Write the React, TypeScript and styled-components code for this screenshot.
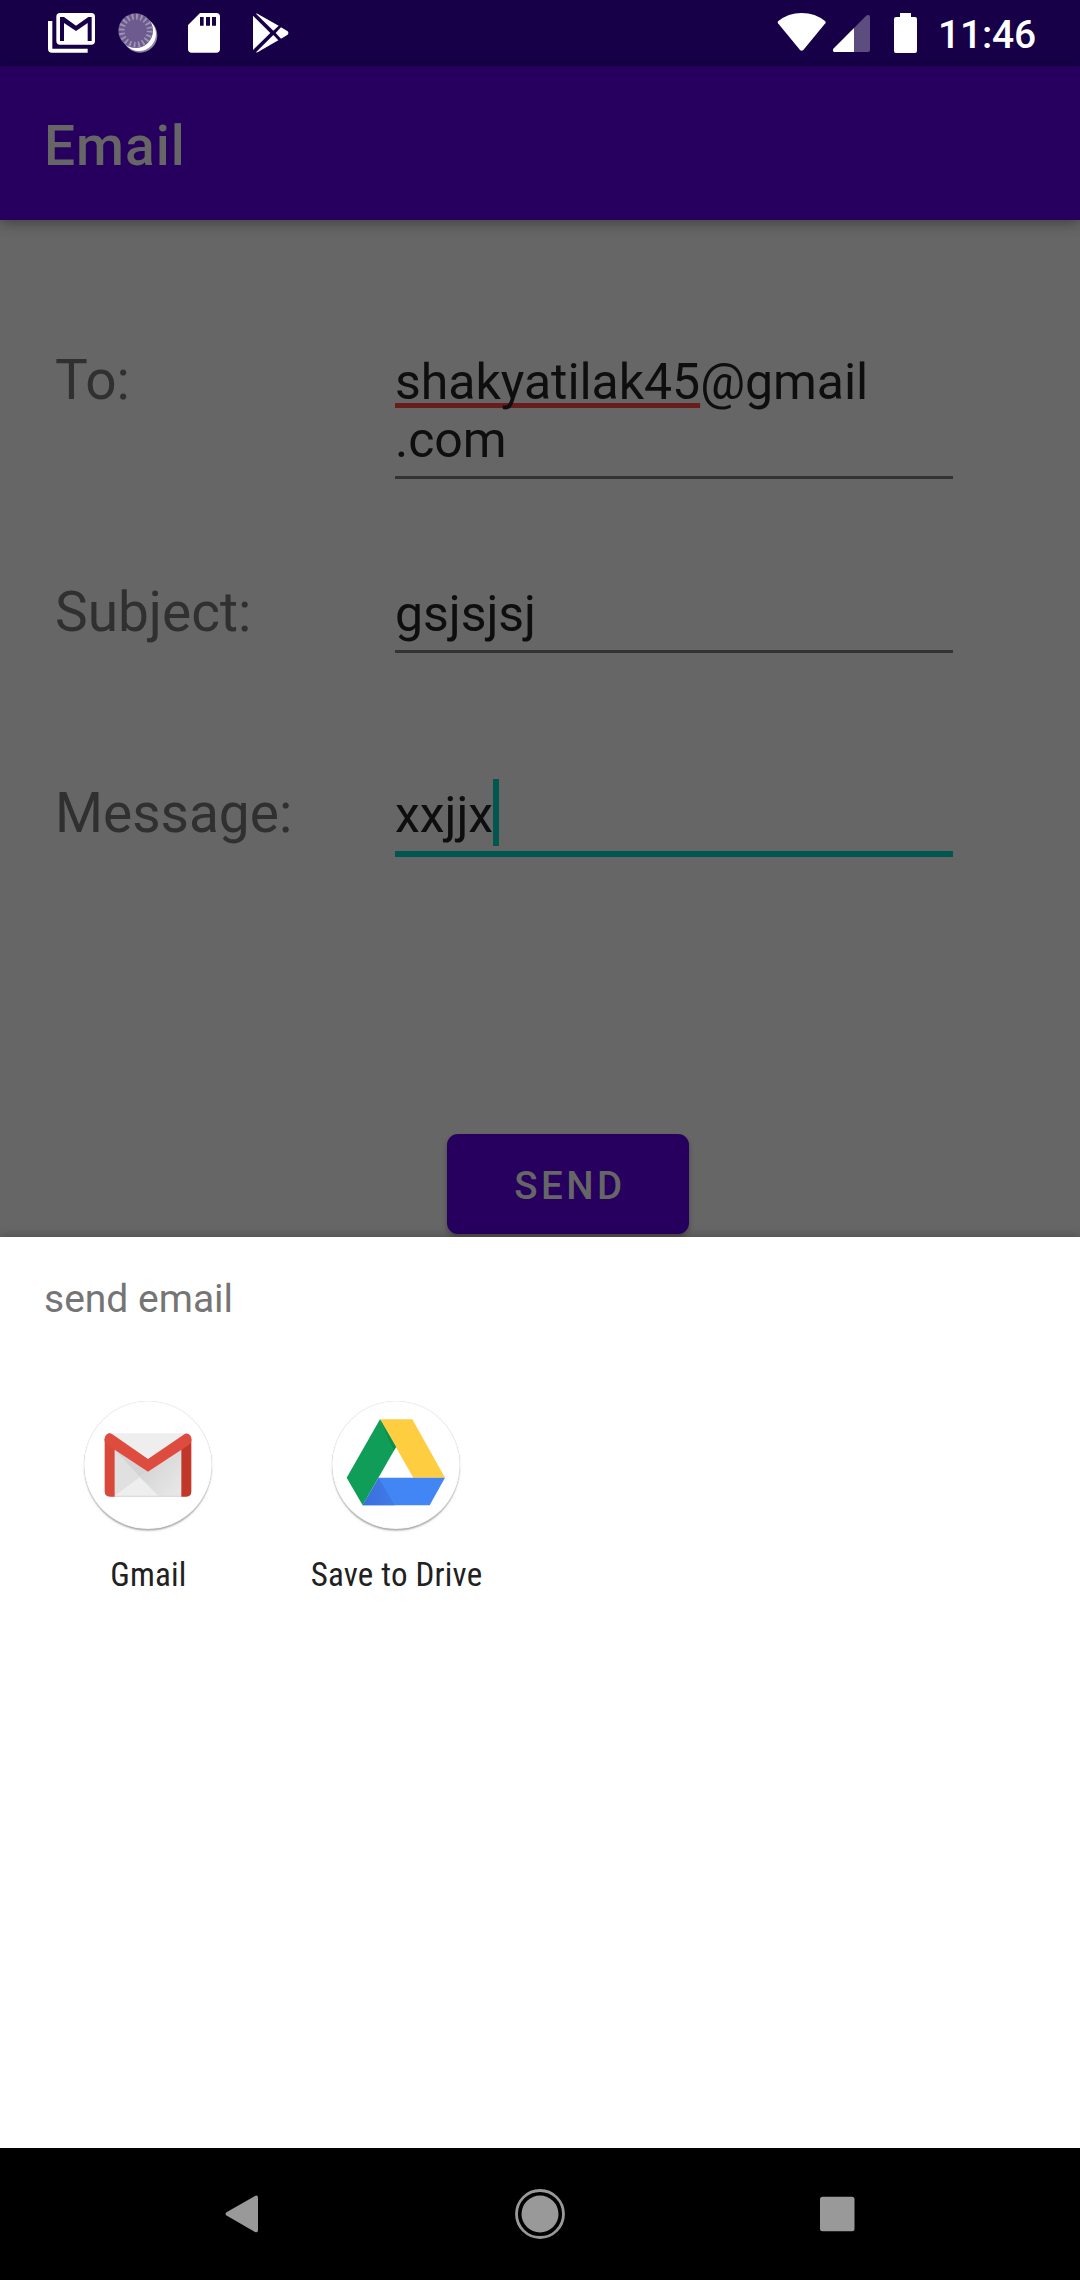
import React from "react";
import styled, { createGlobalStyle } from "styled-components";

const Global = createGlobalStyle`
  html, body { margin: 0; padding: 0; background: #666666; }
  * { box-sizing: border-box; }
`;

const Screen = styled.div`
  width: 1080px;
  height: 2280px;
  display: flex;
  flex-direction: column;
  overflow: hidden;
  background: #666666;
  font-family: Roboto, "Noto Sans", sans-serif;
`;

const StatusBar = styled.header`
  height: 66px;
  flex: none;
  display: flex;
  justify-content: space-between;
  align-items: center;
  padding: 0 44px 0 39px;
  background: #170048;
`;

const StatusGroup = styled.div`
  display: flex;
  align-items: center;
  height: 66px;
`;

const StatusGlyph = styled.svg<{ $width: number }>`
  display: block;
  width: ${(p) => p.$width}px;
  height: 48px;
`;

const Clock = styled.span`
  font-size: 39px;
  line-height: 66px;
  font-weight: 500;
  letter-spacing: -0.2px;
  color: #ffffff;
  padding-top: 2px;
  height: 66px;
  width: 98px;
  white-space: nowrap;
`;

const AppBar = styled.div`
  height: 154px;
  flex: none;
  display: flex;
  align-items: center;
  padding: 5px 44px 0;
  background: #27005f;
  box-shadow: 0 4px 12px rgba(0, 0, 0, 0.32);
`;

const Title = styled.h1`
  margin: 0;
  font-size: 55px;
  line-height: 64px;
  font-weight: 500;
  letter-spacing: 1px;
  color: #666666;
`;

const Form = styled.main`
  height: 1017px;
  flex: none;
  padding: 128px 55px 0;
  display: flex;
  flex-direction: column;
`;

const FieldRow = styled.div<{ $after: number }>`
  display: grid;
  grid-template-columns: 340px 558px;
  align-items: baseline;
  margin-bottom: ${(p) => p.$after}px;
`;

const Label = styled.label`
  font-size: 55px;
  line-height: 64px;
  color: #303030;
`;

const Input = styled.div<{ $focused?: boolean }>`
  font-size: 50px;
  line-height: 58px;
  letter-spacing: -0.05px;
  color: #0e0e0e;
  padding-bottom: 7px;
  border-bottom: ${(p) => (p.$focused ? "6px solid #01574f" : "3px solid #333333")};
`;

const Misspelled = styled.span`
  text-decoration: underline 5px #681d1d;
  text-decoration-skip-ink: none;
  text-underline-offset: 4px;
`;

const CaretHost = styled.span`
  position: relative;
`;

const Caret = styled.i`
  position: absolute;
  right: -6px;
  top: -7px;
  width: 6px;
  height: 67px;
  background: #01574f;
`;

const SendButton = styled.button`
  align-self: flex-start;
  margin-left: 392px;
  width: 242px;
  height: 100px;
  padding: 3px 0 0 4px;
  border: 0;
  border-radius: 11px;
  background: #27005f;
  box-shadow: 0 3px 5px rgba(0, 0, 0, 0.3);
  color: #666666;
  font: 500 38.5px/46px Roboto, sans-serif;
  letter-spacing: 3.44px;
`;

const Sheet = styled.section`
  position: relative;
  height: 911px;
  flex: none;
  padding: 39px 24px 0;
  background: #ffffff;
  box-shadow: 0 0 10px rgba(0, 0, 0, 0.3);
`;

const SheetTitle = styled.h2`
  margin: 0 0 78px 20px;
  font-size: 39px;
  line-height: 47px;
  font-weight: 400;
  color: #757575;
`;

const Targets = styled.div`
  display: grid;
  grid-template-columns: repeat(4, 248px);
`;

const Target = styled.div`
  display: flex;
  flex-direction: column;
  align-items: center;
  gap: 26px;
`;

const AppDisc = styled.div`
  width: 128px;
  height: 128px;
  border-radius: 50%;
  background: #ffffff;
  box-shadow: inset 0 0 1px rgba(0, 0, 0, 0.3), 0 2px 2px -0.5px rgba(0, 0, 0, 0.36);

  svg {
    display: block;
    width: 128px;
    height: 128px;
  }
`;

const TargetName = styled.span`
  font-family: "Roboto Condensed", Roboto, sans-serif;
  font-size: 33px;
  line-height: 40px;
  font-stretch: condensed;
  letter-spacing: 0.2px;
  padding-left: 1px;
  white-space: nowrap;
  color: #212121;
`;

const NavBar = styled.nav`
  height: 132px;
  flex: none;
  display: flex;
  justify-content: space-between;
  align-items: center;
  padding: 0 212px;
  background: #000000;

  svg {
    display: block;
    width: 60px;
    height: 60px;
    fill: #999999;
  }
`;

const MailStackGlyph = () => (
  <StatusGlyph $width={66} viewBox="27 27 198 144" fill="#fff">
    <path d="M54 63h13v83h106v12H66q-12 0-12-12z" />
    <path
      fillRule="evenodd"
      d="M90 39h94q11 0 11 11v73q0 11-11 11H90q-11 0-11-11V50q0-11 11-11zM90 51v72h12V69l36 24 35-24v54h12V51h-10l-37 26-36-26z"
    />
  </StatusGlyph>
);

const SyncGlyph = () => (
  <StatusGlyph $width={66} viewBox="225 27 198 144">
    <circle cx="330" cy="106" r="52" fill="#8f83a8" />
    <circle cx="327" cy="102" r="51" fill="#fff" />
    <circle cx="317" cy="92" r="52" fill="#6d5b90" />
    <circle
      cx="317"
      cy="92"
      r="42"
      fill="none"
      stroke="#9e93b4"
      strokeWidth="17"
      strokeDasharray="5.5 7.694"
    />
  </StatusGlyph>
);

const SdGlyph = () => (
  <StatusGlyph $width={66} viewBox="423 27 198 144" fill="#fff">
    <path
      fillRule="evenodd"
      d="M510 39h49q11 0 11 11v97q0 11-11 11h-74q-11 0-11-11V75zM510 51v26h11V51zM528 51v26h12V51zM546 51v26h12V51z"
    />
  </StatusGlyph>
);

const PlayGlyph = () => (
  <StatusGlyph $width={66} viewBox="621 27 198 144" fill="#fff">
    <path d="M669 47v103l52-51z" />
    <path d="M678 41q3-1 7 2l61 34-16 15z" />
    <path d="M753 82l20 12q5 5 0 10l-20 12-16-17z" />
    <path d="M730 105l15 16-61 35q-4 2-6 1z" />
  </StatusGlyph>
);

const WifiGlyph = () => (
  <StatusGlyph $width={52} viewBox="48 27 156 144" fill="#fff">
    <path d="M54 64Q84 39 125 39t71 25q2 3 0 6l-66 80q-5 5-10 0L54 70q-2-3 0-6z" />
  </StatusGlyph>
);

const SignalGlyph = () => (
  <StatusGlyph $width={44} viewBox="204 27 132 144">
    <path d="M282 84l38-38q10-3 10 5v99q0 6-6 6h-42z" fill="#5d4d7e" />
    <path d="M282 84v72h-58q-8-2-4-10z" fill="#fff" />
  </StatusGlyph>
);

const BatteryGlyph = () => (
  <StatusGlyph $width={66} viewBox="336 27 198 144" fill="#fff">
    <path d="M420 39h33v12h12q6 0 6 6v96q0 6-6 6h-57q-6 0-6-6V57q0-6 6-6h12z" />
  </StatusGlyph>
);

const GmailLogo = () => (
  <svg viewBox="42 32 384 384">
    <defs>
      <linearGradient id="envelopeFold" x1="0" y1="0" x2="1" y2="1">
        <stop offset="0" stopColor="#cfcfcf" />
        <stop offset="1" stopColor="#e9e9e9" />
      </linearGradient>
    </defs>
    <path d="M118 129h233v190H118z" fill="#eeeeee" />
    <path d="M134 178v138l76-56z" fill="#e0e0e0" />
    <path d="M134 178l100 66-24 17z" fill="#d4d4d4" />
    <path d="M234 244l100-66v140h-68l-56-57z" fill="url(#envelopeFold)" />
    <path d="M134 316h200v3H134z" fill="#d5d5d5" />
    <path d="M104 146l30 20v153h-14q-16 0-16-16z" fill="#d8483b" />
    <path d="M364 146l-30 20v153h15q15 0 15-16z" fill="#c1372a" />
    <path d="M104 153q-3-17 12-24 6-1 11 3l107 74 109-74q7-5 14 0 9 6 7 20-1 8-9 13L234 244 113 165q-8-5-9-12z" fill="#de4c40" />
  </svg>
);

const DriveLogo = () => (
  <svg viewBox="96 32 384 384">
    <defs>
      <linearGradient id="greenShade" x1="0" y1="1" x2="1" y2="0">
        <stop offset="0" stopColor="#109d58" />
        <stop offset="1" stopColor="#0b8043" />
      </linearGradient>
      <linearGradient id="blueShade" x1="0" y1="0" x2="1" y2="0">
        <stop offset="0" stopColor="#3a6fd9" />
        <stop offset="1" stopColor="#407ce9" />
      </linearGradient>
    </defs>
    <path d="M240 87h97l98 175h-95z" fill="#ffcd40" />
    <path d="M240 87l48 83L188 345l-48-83z" fill="#109d58" />
    <path d="M240 87l48 83-7 12z" fill="url(#greenShade)" />
    <path d="M236 262h199l-46 83H188z" fill="#4285f4" />
    <path d="M236 262l48 83h-96z" fill="url(#blueShade)" />
  </svg>
);

export default function App() {
  return (
    <>
      <Global />
      <Screen>
        <StatusBar>
          <StatusGroup>
            <MailStackGlyph />
            <SyncGlyph />
            <SdGlyph />
            <PlayGlyph />
          </StatusGroup>
          <StatusGroup>
            <WifiGlyph />
            <SignalGlyph />
            <BatteryGlyph />
            <Clock>11:46</Clock>
          </StatusGroup>
        </StatusBar>
        <AppBar>
          <Title>Email</Title>
        </AppBar>
        <Form>
          <FieldRow $after={101}>
            <Label>To:</Label>
            <Input>
              <Misspelled>shakyatilak45</Misspelled>@gmail
              <br />
              .com
            </Input>
          </FieldRow>
          <FieldRow $after={128}>
            <Label>Subject:</Label>
            <Input>gsjsjsj</Input>
          </FieldRow>
          <FieldRow $after={277}>
            <Label>Message:</Label>
            <Input $focused>
              <CaretHost>
                xxjjx
                <Caret />
              </CaretHost>
            </Input>
          </FieldRow>
          <SendButton>SEND</SendButton>
        </Form>
        <Sheet>
          <SheetTitle>send email</SheetTitle>
          <Targets>
            <Target>
              <AppDisc>
                <GmailLogo />
              </AppDisc>
              <TargetName>Gmail</TargetName>
            </Target>
            <Target>
              <AppDisc>
                <DriveLogo />
              </AppDisc>
              <TargetName>Save to Drive</TargetName>
            </Target>
          </Targets>
        </Sheet>
        <NavBar>
          <svg viewBox="212 2184 60 60">
            <path d="M226.500 2212.200l28.500-16.300q3-1.500 3 2v32q0 3.500-3 2l-28.500-16.300q-2-1.700 0-3.400z" />
          </svg>
          <svg viewBox="510 2184 60 60">
            <circle cx="540" cy="2214" r="18.500" />
            <circle cx="540" cy="2214" r="23.500" fill="none" stroke="#999" strokeWidth="2.800" />
          </svg>
          <svg viewBox="808 2184 60 60">
            <rect x="820" y="2196.700" width="34.500" height="34.500" rx="2.500" />
          </svg>
        </NavBar>
      </Screen>
    </>
  );
}
